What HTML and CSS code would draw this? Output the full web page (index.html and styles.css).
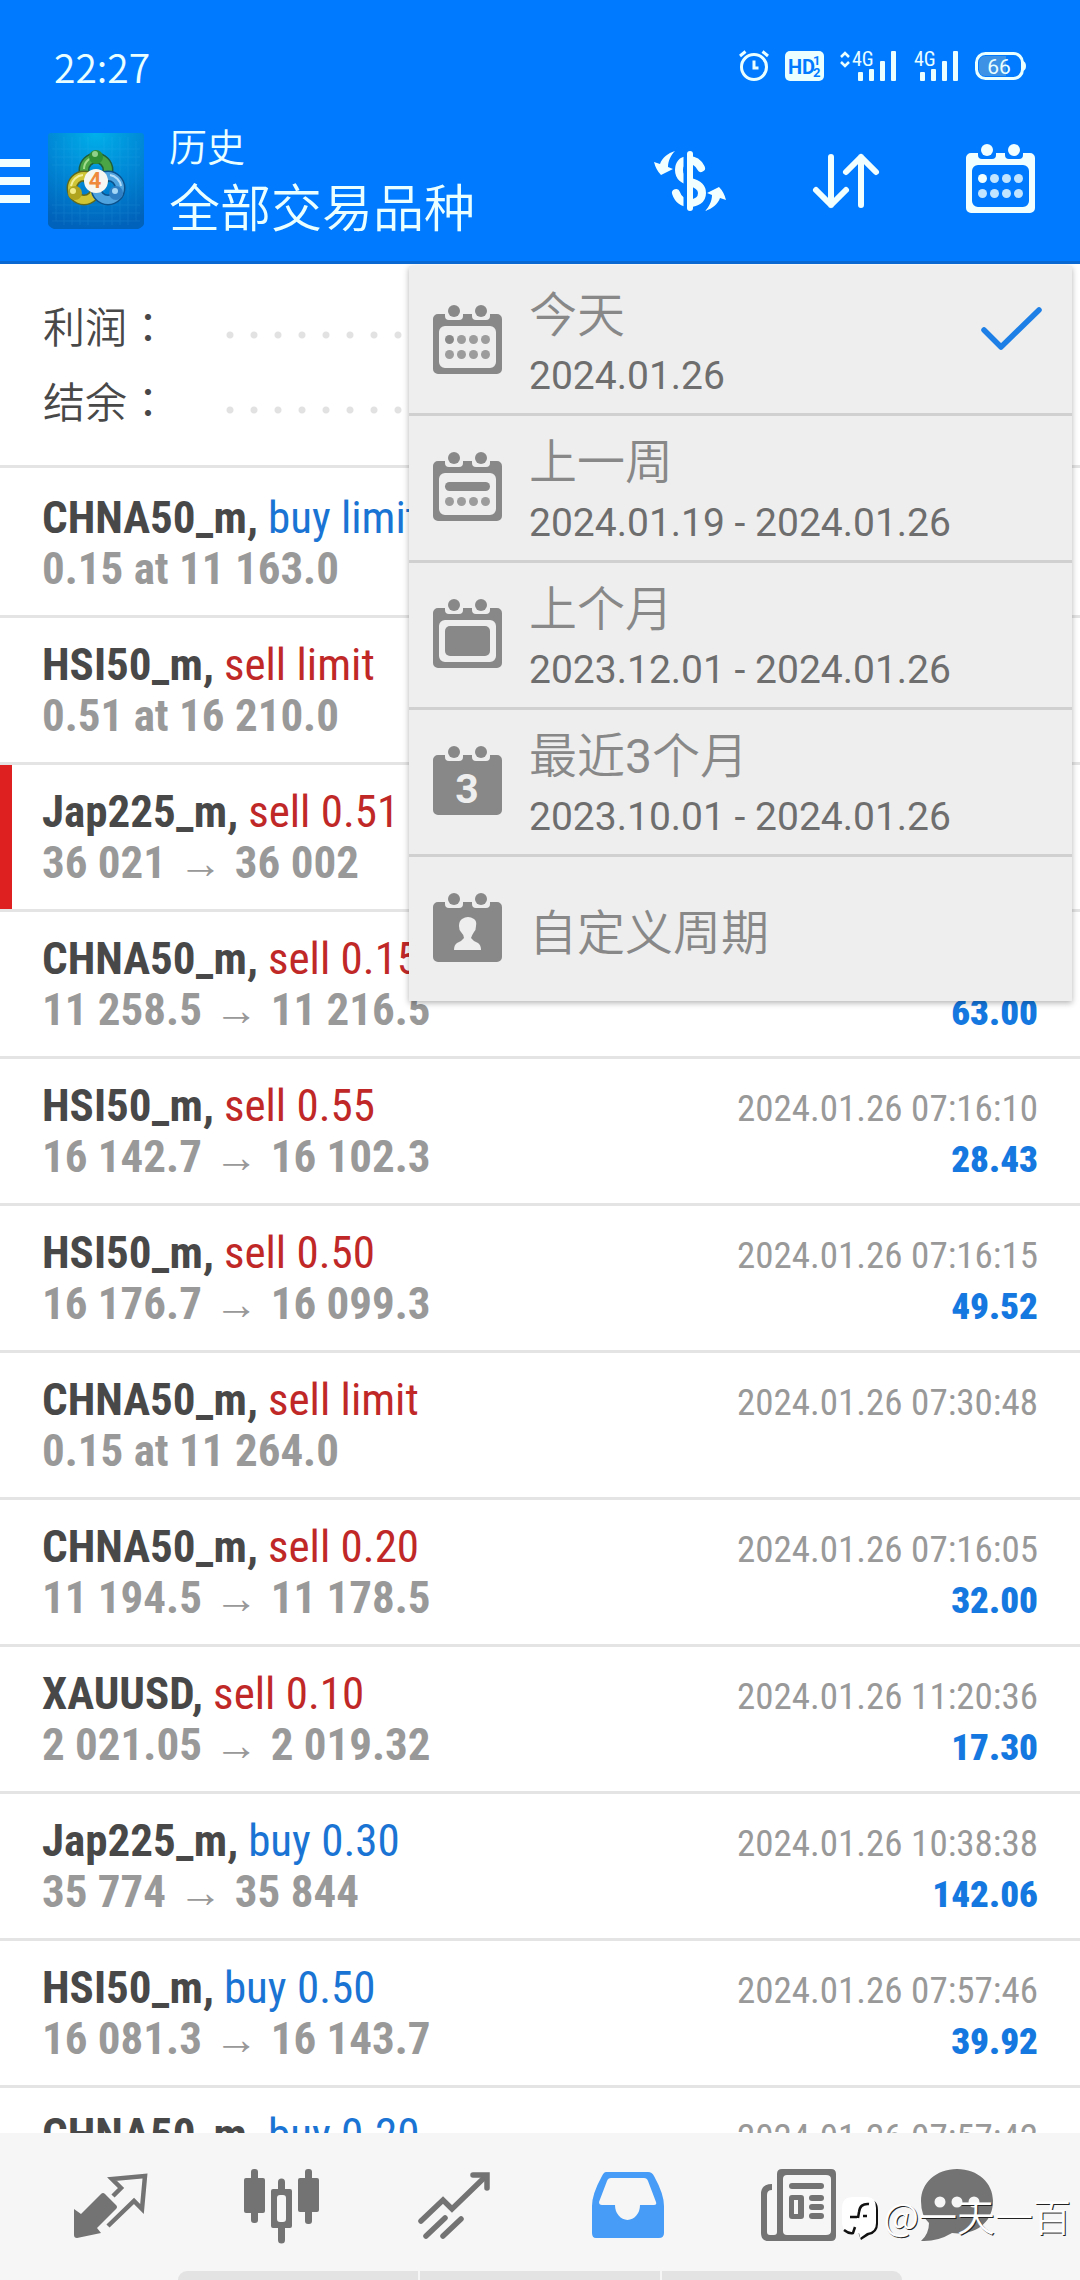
FILE: index.html
```html
<!DOCTYPE html>
<html lang="zh-CN">
<head>
<meta charset="utf-8">
<meta name="viewport" content="width=device-width, initial-scale=1">
<title>历史</title>
<link rel="stylesheet" href="styles.css">
</head>
<body>
<svg class="defs" aria-hidden="true">
  <defs>
    <g id="rings"><circle cx="21" cy="6" r="6"/><circle cx="48" cy="6" r="6"/></g>
    <path id="body" d="M5 9H12V11a4 4 0 0 0 4 4H26a4 4 0 0 0 4-4V9H39v2a4 4 0 0 0 4 4H53a4 4 0 0 0 4-4V9H64a5 5 0 0 1 5 5V64a5 5 0 0 1-5 5H5a5 5 0 0 1-5-5V14a5 5 0 0 1 5-5Z"/>
    <path id="frame" fill-rule="evenodd" d="M5 9H12V11a4 4 0 0 0 4 4H26a4 4 0 0 0 4-4V9H39v2a4 4 0 0 0 4 4H53a4 4 0 0 0 4-4V9H64a5 5 0 0 1 5 5V64a5 5 0 0 1-5 5H5a5 5 0 0 1-5-5V14a5 5 0 0 1 5-5ZM12 21a6 6 0 0 0-6 6V57a6 6 0 0 0 6 6H57a6 6 0 0 0 6-6V27a6 6 0 0 0-6-6Z"/>
    <g id="dots" opacity=".8"><circle cx="16.500" cy="49.500" r="4.500"/><circle cx="28.500" cy="49.500" r="4.500"/><circle cx="40.500" cy="49.500" r="4.500"/><circle cx="52.500" cy="49.500" r="4.500"/></g>
    <g id="day"><use href="#rings"/><use href="#frame"/><use href="#dots"/><circle cx="16.500" cy="34.500" r="4.500"/><g opacity=".8"><circle cx="28.500" cy="34.500" r="4.500"/><circle cx="40.500" cy="34.500" r="4.500"/><circle cx="52.500" cy="34.500" r="4.500"/></g></g>
    <radialGradient id="sky" cx=".5" cy="0" r="1"><stop offset="0" stop-color="#00b0ea"/><stop offset=".5" stop-color="#0088d6"/><stop offset="1" stop-color="#0062ba"/></radialGradient>
  </defs>
</svg>

<header class="header">
  <div class="status">
    <span class="clock">22:27</span>
    <div class="status-icons">
      <svg width="30" height="32" viewBox="0 0 30 32" fill="none" stroke="#eaffff" stroke-width="3"><circle cx="15" cy="17" r="12.500"/><path d="M15 10.500V18H19.500M1 6L6.500 1.500M29 6L23.500 1.500"/></svg>
      <svg width="39" height="30" viewBox="0 0 39 30"><rect width="39" height="30" rx="5" fill="#eaffff"/><text class="hd" x="3" y="23">HD</text><text class="hd-small" x="28" y="14">1</text><text class="hd-small" x="28" y="26">2</text></svg>
      <svg width="57" height="30" viewBox="0 0 57 30" fill="#eaffff"><path d="M1 6L5 2L9 6M1 11L5 15L9 11" fill="none" stroke="#eaffff" stroke-width="2.500"/><text class="net" x="12" y="15">4G</text><rect x="18" y="21" width="5" height="9" rx="1"/><rect x="29" y="18" width="5" height="12" rx="1"/><rect x="40" y="10" width="5" height="20" rx="1"/><rect x="51" width="5" height="30" rx="1"/></svg>
      <svg width="46" height="30" viewBox="0 0 46 30" fill="#eaffff"><text class="net" x="1" y="15">4G</text><rect x="7" y="21" width="5" height="9" rx="1"/><rect x="18" y="18" width="5" height="12" rx="1"/><rect x="29" y="10" width="5" height="20" rx="1"/><rect x="40" width="5" height="30" rx="1"/></svg>
      <svg width="51" height="28" viewBox="0 0 51 28"><rect x="1.500" y="1.500" width="46" height="25" rx="9" fill="none" stroke="#eaffff" stroke-width="3"/><path d="M10 4H31V24H10a6 6 0 0 1-6-6V10a6 6 0 0 1 6-6Z" fill="#3d92e6"/><path d="M48 9q3 1 3 5t-3 5Z" fill="#eaffff"/><text class="battery" x="24" y="22">66</text></svg>
    </div>
  </div>
  <div class="appbar">
    <button class="burger" type="button" aria-label="菜单"><i></i><i></i><i></i></button>
    <svg class="logo" width="96" height="96" viewBox="0 0 96 96">
      <path d="M3 0H93a3 3 0 0 1 3 3V91q-1 3-6 5H6q-5-2-6-5V3a3 3 0 0 1 3-3Z" fill="url(#sky)"/>
      <path d="M8 8V88M16 4V92M24 4V92M32 4V92M40 4V92M56 4V92M64 4V92M72 4V92M80 4V92M88 8V88M4 16H92M4 24H92M4 32H92M4 72H92M4 80H92M4 88H92" stroke="#5cc8ff" stroke-width="1" opacity=".12"/>
      <g fill="none">
        <circle cx="48" cy="37" r="12" stroke="#1f5f3a" stroke-width="11"/><circle cx="48" cy="37" r="12" stroke="#4aa544" stroke-width="8"/>
        <circle cx="36" cy="55" r="12" stroke="#5f6a1e" stroke-width="11"/><circle cx="36" cy="55" r="12" stroke="#cfc535" stroke-width="8"/>
        <circle cx="60" cy="55" r="12" stroke="#0c528c" stroke-width="11"/><circle cx="60" cy="55" r="12" stroke="#4fa3de" stroke-width="8"/>
        <path d="M36 36a12 12 0 0 1 12-12" stroke="#a3dc8c" stroke-width="2"/>
        <path d="M23 53a13 13 0 0 1 12-11" stroke="#f3ee9a" stroke-width="2"/>
        <path d="M62 42a13 13 0 0 1 11 11" stroke="#b4defa" stroke-width="2"/>
      </g>
      <circle cx="48" cy="24" r="7" fill="#2f8f35"/><circle cx="47" cy="21" r="3" fill="#8fd18a"/>
      <circle cx="27" cy="60" r="7" fill="#b0a31e"/><circle cx="25" cy="58" r="3" fill="#f2eb86"/>
      <circle cx="68" cy="60" r="7" fill="#2f7fc4"/><circle cx="67" cy="58" r="3" fill="#a4d6f6"/>
      <circle cx="48" cy="48" r="12" fill="#f6f6f2"/>
      <text class="logo-num" x="47" y="55">4</text>
    </svg>
    <h1 class="title"><small>历史</small>全部交易品种</h1>
    <div class="actions">
      <button type="button" aria-label="货币"><svg width="72" height="60" viewBox="0 0 72 60"><path d="M47 17C44 11 40 9 35 9C27 9 25 14 25 19C25 27 31 29 36 31C44 33 48 36 48 42C48 49 42 52 36 52C28 52 24 48 22 42" fill="none" stroke="#f2ffff" stroke-width="8" stroke-linecap="round"/><path d="M31.500 0V60" stroke="#007aff" stroke-width="4"/><rect x="33" width="6" height="60" rx="3" fill="#f2ffff"/><path id="swoop" d="M21 0C14 2 8 7 6 13L0 11Q2 19 7 24L19 18L14 16C14 10 17 4 21 0Z" fill="#f2ffff"/><use href="#swoop" transform="rotate(180 36 30)"/></svg></button>
      <button type="button" aria-label="排序"><svg width="66" height="54" viewBox="0 0 66 54" fill="none" stroke="#f2ffff" stroke-width="6" stroke-linecap="round" stroke-linejoin="round"><path d="M18 3V51M3 36L18 51L33 36M48 51V3M33 18L48 3L63 18"/></svg></button>
      <button type="button" aria-label="周期" aria-expanded="true"><svg width="69" height="73" viewBox="0 0 69 73" fill="#f2ffff"><use href="#day"/></svg></button>
    </div>
  </div>
</header>

<main class="main">
  <dl class="summary">
    <div><dt>利润<span class="colon" lang="zh-Hant">：</span></dt><dd></dd></div>
    <div><dt>结余<span class="colon" lang="zh-Hant">：</span></dt><dd></dd></div>
  </dl>
  <ul class="deals">
    <li><p><b>CHNA50_m,</b> <span class="buy">buy limit</span></p><p class="sub">0.15 at 11 163.0</p></li>
    <li><p><b>HSI50_m,</b> <span class="sell">sell limit</span></p><p class="sub">0.51 at 16 210.0</p></li>
    <li class="stopped"><p><b>Jap225_m,</b> <span class="sell">sell 0.51</span></p><p class="sub">36 021 <i>→</i> 36 002</p></li>
    <li><p><b>CHNA50_m,</b> <span class="sell">sell 0.15</span></p><p class="sub">11 258.5 <i>→</i> 11 216.5<strong>63.00</strong></p></li>
    <li><p><b>HSI50_m,</b> <span class="sell">sell 0.55</span><time>2024.01.26 07:16:10</time></p><p class="sub">16 142.7 <i>→</i> 16 102.3<strong>28.43</strong></p></li>
    <li><p><b>HSI50_m,</b> <span class="sell">sell 0.50</span><time>2024.01.26 07:16:15</time></p><p class="sub">16 176.7 <i>→</i> 16 099.3<strong>49.52</strong></p></li>
    <li><p><b>CHNA50_m,</b> <span class="sell">sell limit</span><time>2024.01.26 07:30:48</time></p><p class="sub">0.15 at 11 264.0</p></li>
    <li><p><b>CHNA50_m,</b> <span class="sell">sell 0.20</span><time>2024.01.26 07:16:05</time></p><p class="sub">11 194.5 <i>→</i> 11 178.5<strong>32.00</strong></p></li>
    <li><p><b>XAUUSD,</b> <span class="sell">sell 0.10</span><time>2024.01.26 11:20:36</time></p><p class="sub">2 021.05 <i>→</i> 2 019.32<strong>17.30</strong></p></li>
    <li><p><b>Jap225_m,</b> <span class="buy">buy 0.30</span><time>2024.01.26 10:38:38</time></p><p class="sub">35 774 <i>→</i> 35 844<strong>142.06</strong></p></li>
    <li><p><b>HSI50_m,</b> <span class="buy">buy 0.50</span><time>2024.01.26 07:57:46</time></p><p class="sub">16 081.3 <i>→</i> 16 143.7<strong>39.92</strong></p></li>
    <li><p><b>CHNA50_m,</b> <span class="buy">buy 0.20</span><time>2024.01.26 07:57:42</time></p></li>
  </ul>

  <div class="menu">
    <button type="button"><svg width="69" height="69" viewBox="0 0 69 69"><use href="#day"/></svg><span>今天<small>2024.01.26</small></span><svg class="check" width="62" height="44" viewBox="0 0 62 44"><path d="M3 23L20 40L58 3" fill="none" stroke="#1e80e6" stroke-width="5.500" stroke-linecap="round" stroke-linejoin="round"/></svg></button>
    <button type="button"><svg width="69" height="69" viewBox="0 0 69 69"><use href="#rings"/><use href="#frame"/><use href="#dots"/><rect x="12" y="30" width="45" height="9" rx="4.500"/></svg><span>上一周<small>2024.01.19 - 2024.01.26</small></span></button>
    <button type="button"><svg width="69" height="69" viewBox="0 0 69 69"><use href="#rings"/><use href="#frame"/><rect x="12" y="27" width="45" height="30" rx="5"/></svg><span>上个月<small>2023.12.01 - 2024.01.26</small></span></button>
    <button type="button"><svg width="69" height="69" viewBox="0 0 69 69"><use href="#rings"/><use href="#body"/><text class="three" x="34" y="57">3</text></svg><span>最近<em>3</em>个月<small>2023.10.01 - 2024.01.26</small></span></button>
    <button type="button"><svg width="69" height="69" viewBox="0 0 69 69"><use href="#rings"/><use href="#body"/><path d="M29 26Q35 22 41 26Q44 28 43 33Q43 37 41 39Q39 42 38 45Q40 48 45 50Q48 52 48 57H21Q21 52 24 50Q29 48 31 45Q31 42 28 39Q26 37 26 33Q26 28 29 26Z" fill="#eee"/></svg><span>自定义周期</span></button>
  </div>
</main>

<nav class="tabs">
  <div class="tab-row">
    <a href="#quotes" aria-label="行情"><svg width="78" height="78" viewBox="0 0 78 78"><path d="M3 41L10 46L30 26Q32 24 34 26L45 37Q47 39 45 41L26 60L30 65L6 70Q3 70 3 67Z"/><path d="M42 28L50 20L41 11L74 8L71 41L63 33L37 58" fill="none" stroke="#737373" stroke-width="4.500"/></svg></a>
    <a href="#chart" aria-label="图表"><svg width="78" height="78" viewBox="0 0 78 78"><rect x="1" y="10" width="21" height="35" rx="2"/><rect x="8" y="1" width="7" height="54" rx="3"/><path fill-rule="evenodd" d="M30 21H47Q49 21 49 23V58Q49 60 47 60H30Q28 60 28 58V23Q28 21 30 21ZM37 27Q34 27 34 30V51Q34 54 37 54H40Q43 54 43 51V30Q43 27 40 27Z"/><path d="M35 22V14a3 3 0 0 1 7 0V22ZM35 59V72a3 3 0 0 0 7 0V59Z"/><rect x="55" y="10" width="21" height="34" rx="2"/><rect x="62" y="1" width="7" height="55" rx="3"/></svg></a>
    <a href="#trade" aria-label="交易"><svg width="78" height="78" viewBox="0 0 78 78" fill="none" stroke="#737373" stroke-width="5.500" stroke-linecap="round"><path d="M5 53L27 32L36 41L70 8"/><path d="M57 7H71V20"/><path d="M29 50L10 68M45 51L27 68"/></svg></a>
    <a href="#history" aria-label="历史" aria-current="page"><svg width="78" height="78" viewBox="0 0 78 78"><path fill-rule="evenodd" d="M18 4H60Q64 4 66 8Q76 26 76 38V65Q76 70 71 70H8Q4 70 4 65V38Q4 26 14 8Q16 4 18 4ZM23 10Q20 10 19 13L11 34Q11 37 14 37H27A12.500 15 0 0 0 52 37H66Q69 37 68 34L60 13Q59 10 56 10Z"/></svg></a>
    <a href="#news" aria-label="新闻"><svg width="78" height="78" viewBox="0 0 78 78"><path fill-rule="evenodd" d="M22 1H71Q76 1 76 6V68Q76 73 71 73H9Q1 73 1 65V26Q1 16 12 16V22Q7 22 7 27V64Q7 67 10 67H14Q17 67 17 64V6Q17 1 22 1ZM27 7Q23 7 23 11V63Q23 67 27 67H66Q71 67 71 63V11Q71 7 66 7Z"/><rect x="29" y="15" width="35" height="6" rx="3"/><path fill-rule="evenodd" d="M32 27H41Q44 27 44 30V48Q44 51 41 51H32Q29 51 29 48V30Q29 27 32 27ZM34 32V46H38V32Z"/><rect x="49" y="27" width="15" height="6" rx="3"/><rect x="49" y="36" width="15" height="6" rx="3"/><rect x="49" y="45" width="15" height="6" rx="3"/></svg></a>
    <a href="#chat" aria-label="消息"><svg width="78" height="78" viewBox="0 0 78 78"><path d="M39 1C60 1 75 15 75 33C75 54 58 68 34 65Q19 74 3 73Q11 66 11 55Q3 48 3 33C3 15 18 1 39 1Z"/><g fill="#f6f6f6"><circle cx="22" cy="34" r="5.500"/><circle cx="39" cy="34" r="5.500"/><circle cx="56" cy="34" r="5.500"/></g></svg></a>
  </div>
  <div class="system"><i></i><i></i><i></i></div>
</nav>

<div class="watermark">
  <svg width="40" height="46" viewBox="0 0 40 46"><path d="M13 3H26Q37 3 37 14V28Q37 37 28 39L20 44L18 39Z" fill="#111"/><path d="M12 1H26Q35 1 35 12V27Q35 36 26 37L19 42L18 37Q10 39 6 36Q1 33 1 26V12Q1 1 12 1Z" fill="#fff"/><path d="M28 8Q19 7 18 16L17 22M9 21H16M22 20H26M3 34Q8 38 12 37L14 31" fill="none" stroke="#111" stroke-width="2.500"/></svg>
  <span>@一天一百</span>
</div>
</body>
</html>
```
FILE: styles.css
```css
* { box-sizing: border-box; }

body {
  position: relative;
  display: flex;
  flex-direction: column;
  height: 100vh;
  margin: 0;
  overflow: hidden;
  background: #fff;
  color: #484848;
  font-family: Roboto, "Noto Sans CJK SC", sans-serif;
}

p, h1, ul, dl, dd { margin: 0; padding: 0; }
svg { display: block; flex: none; overflow: visible; }
button { margin: 0; padding: 0; border: 0; background: none; font: inherit; color: inherit; text-align: left; }
.defs { position: absolute; width: 0; height: 0; }

/* Header */
.header { flex: none; background: #007aff; border-bottom: 3px solid #0a68d2; color: #eaffff; }

.status {
  display: flex;
  align-items: center;
  justify-content: space-between;
  height: 100px;
  padding: 32px 54px 0;
}
.clock { font: 350 39px/60px "Noto Sans CJK SC", sans-serif; }
.status-icons { display: flex; align-items: center; gap: 16px; }
.hd { font: 700 20px Roboto, sans-serif; fill: #007aff; }
.hd-small { font: 700 13px Roboto, sans-serif; fill: #007aff; }
.net { font: 400 20px "Roboto Condensed", sans-serif; }
.battery { font: 400 21px Roboto, sans-serif; fill: #eaffff; text-anchor: middle; }

.appbar { display: flex; align-items: center; height: 161px; padding-right: 45px; }
.burger { display: flex; flex-direction: column; gap: 10px; width: 30px; }
.burger i { height: 8px; background: #f2ffff; }
.logo { margin-left: 18px; }
.logo-num { font: 700 22px Roboto, sans-serif; fill: #ef8a3c; text-anchor: middle; }
.title {
  flex: 1;
  margin-left: 25px;
  padding-bottom: 11px;
  font: 400 51px/60px "Noto Sans CJK SC", sans-serif;
  font-weight: 350;
}
.title small { display: block; font-size: 38px; }
.actions { display: flex; align-items: center; gap: 87px; }

/* Totals */
.main { position: relative; flex: 1; min-height: 0; overflow: hidden; }
.summary { padding: 26px 43px 25px; border-bottom: 3px solid #e4e4e4; }
.summary div { display: flex; align-items: center; height: 75px; }
.summary dt { width: 183px; padding-bottom: 6px; font: 350 42px/60px "Noto Sans CJK SC", sans-serif; }
.colon { font-family: "Noto Sans CJK TC", sans-serif; }
.summary dd {
  flex: 1;
  height: 8px;
  margin-top: 14px;
  background: radial-gradient(circle at 4px 4px, #e2e2e2 3px, transparent 4px) 0 0 / 24px 8px repeat-x;
}

/* Deals */
.deals { padding-top: 3px; list-style: none; font-family: "Roboto Condensed", sans-serif; }
.deals li { height: 147px; padding: 21px 42px 0; border-bottom: 3px solid #e4e4e4; }
.deals .stopped { box-shadow: inset 12px 0 #df2020; }
.deals p { display: flex; align-items: baseline; gap: 10px; height: 51px; font-size: 45px; line-height: 51px; }
.deals .sub { gap: 0; color: #999; font-weight: 700; white-space: pre; }
.deals i { margin: 0 2px; font: 400 44px/44px "Liberation Sans", sans-serif; }
.buy { color: #1a74d4; }
.sell { color: #c02828; }
.deals time { margin-left: auto; color: #999; font-size: 37px; }
.deals strong { margin-left: auto; color: #1478e0; font-size: 37px; }

/* Period menu */
.menu {
  position: absolute;
  top: 2px;
  left: 409px;
  right: 8px;
  padding-top: 3px;
  background: #eee;
  box-shadow: 0 2px 6px rgba(0, 0, 0, .3);
  color: #888;
}
.menu button {
  display: flex;
  align-items: center;
  width: 100%;
  height: 147px;
  padding: 0 29px 3px 24px;
  border-bottom: 3px solid #d0d0d0;
}
.menu button:last-child { height: 144px; border-bottom: 0; }
.menu svg { fill: #888; }
.menu span { flex: 1; margin-left: 27px; padding-top: 12px; font: 350 48px/60px Roboto, "Noto Sans CJK SC", sans-serif; }
.menu em { font-style: normal; font-weight: 400; }
.menu small { display: block; color: #6e6e6e; font-size: 39px; font-weight: 400; }
.menu .check { margin-bottom: 22px; }
.three { font: 700 41px Roboto, sans-serif; fill: #eee; text-anchor: middle; }

/* Tabs */
.tabs { flex: none; background: #f6f6f6; }
.tab-row {
  display: grid;
  grid-template-columns: repeat(5, 6fr) 5fr;
  align-items: center;
  height: 138px;
  padding: 16px 51px 6px 24px;
}
.tab-row a { display: flex; justify-content: center; }
.tab-row svg { fill: #737373; }
.tab-row svg[fill="none"] { fill: none; }
.tab-row [aria-current] svg { fill: #479cf7; }
.system { display: flex; gap: 2px; width: 67%; height: 9px; margin: 0 auto; border-radius: 9px 9px 0 0; overflow: hidden; }
.system i { flex: 1; background: #e3e3e3; }

.watermark {
  position: absolute;
  right: 9px;
  bottom: 30px;
  display: flex;
  align-items: center;
  gap: 2px;
  color: #fff;
  font: 350 38px/54px "Noto Sans CJK SC", sans-serif;
  text-shadow: 1px 1px 0 #222;
}
.watermark span { padding-bottom: 8px; }
```
